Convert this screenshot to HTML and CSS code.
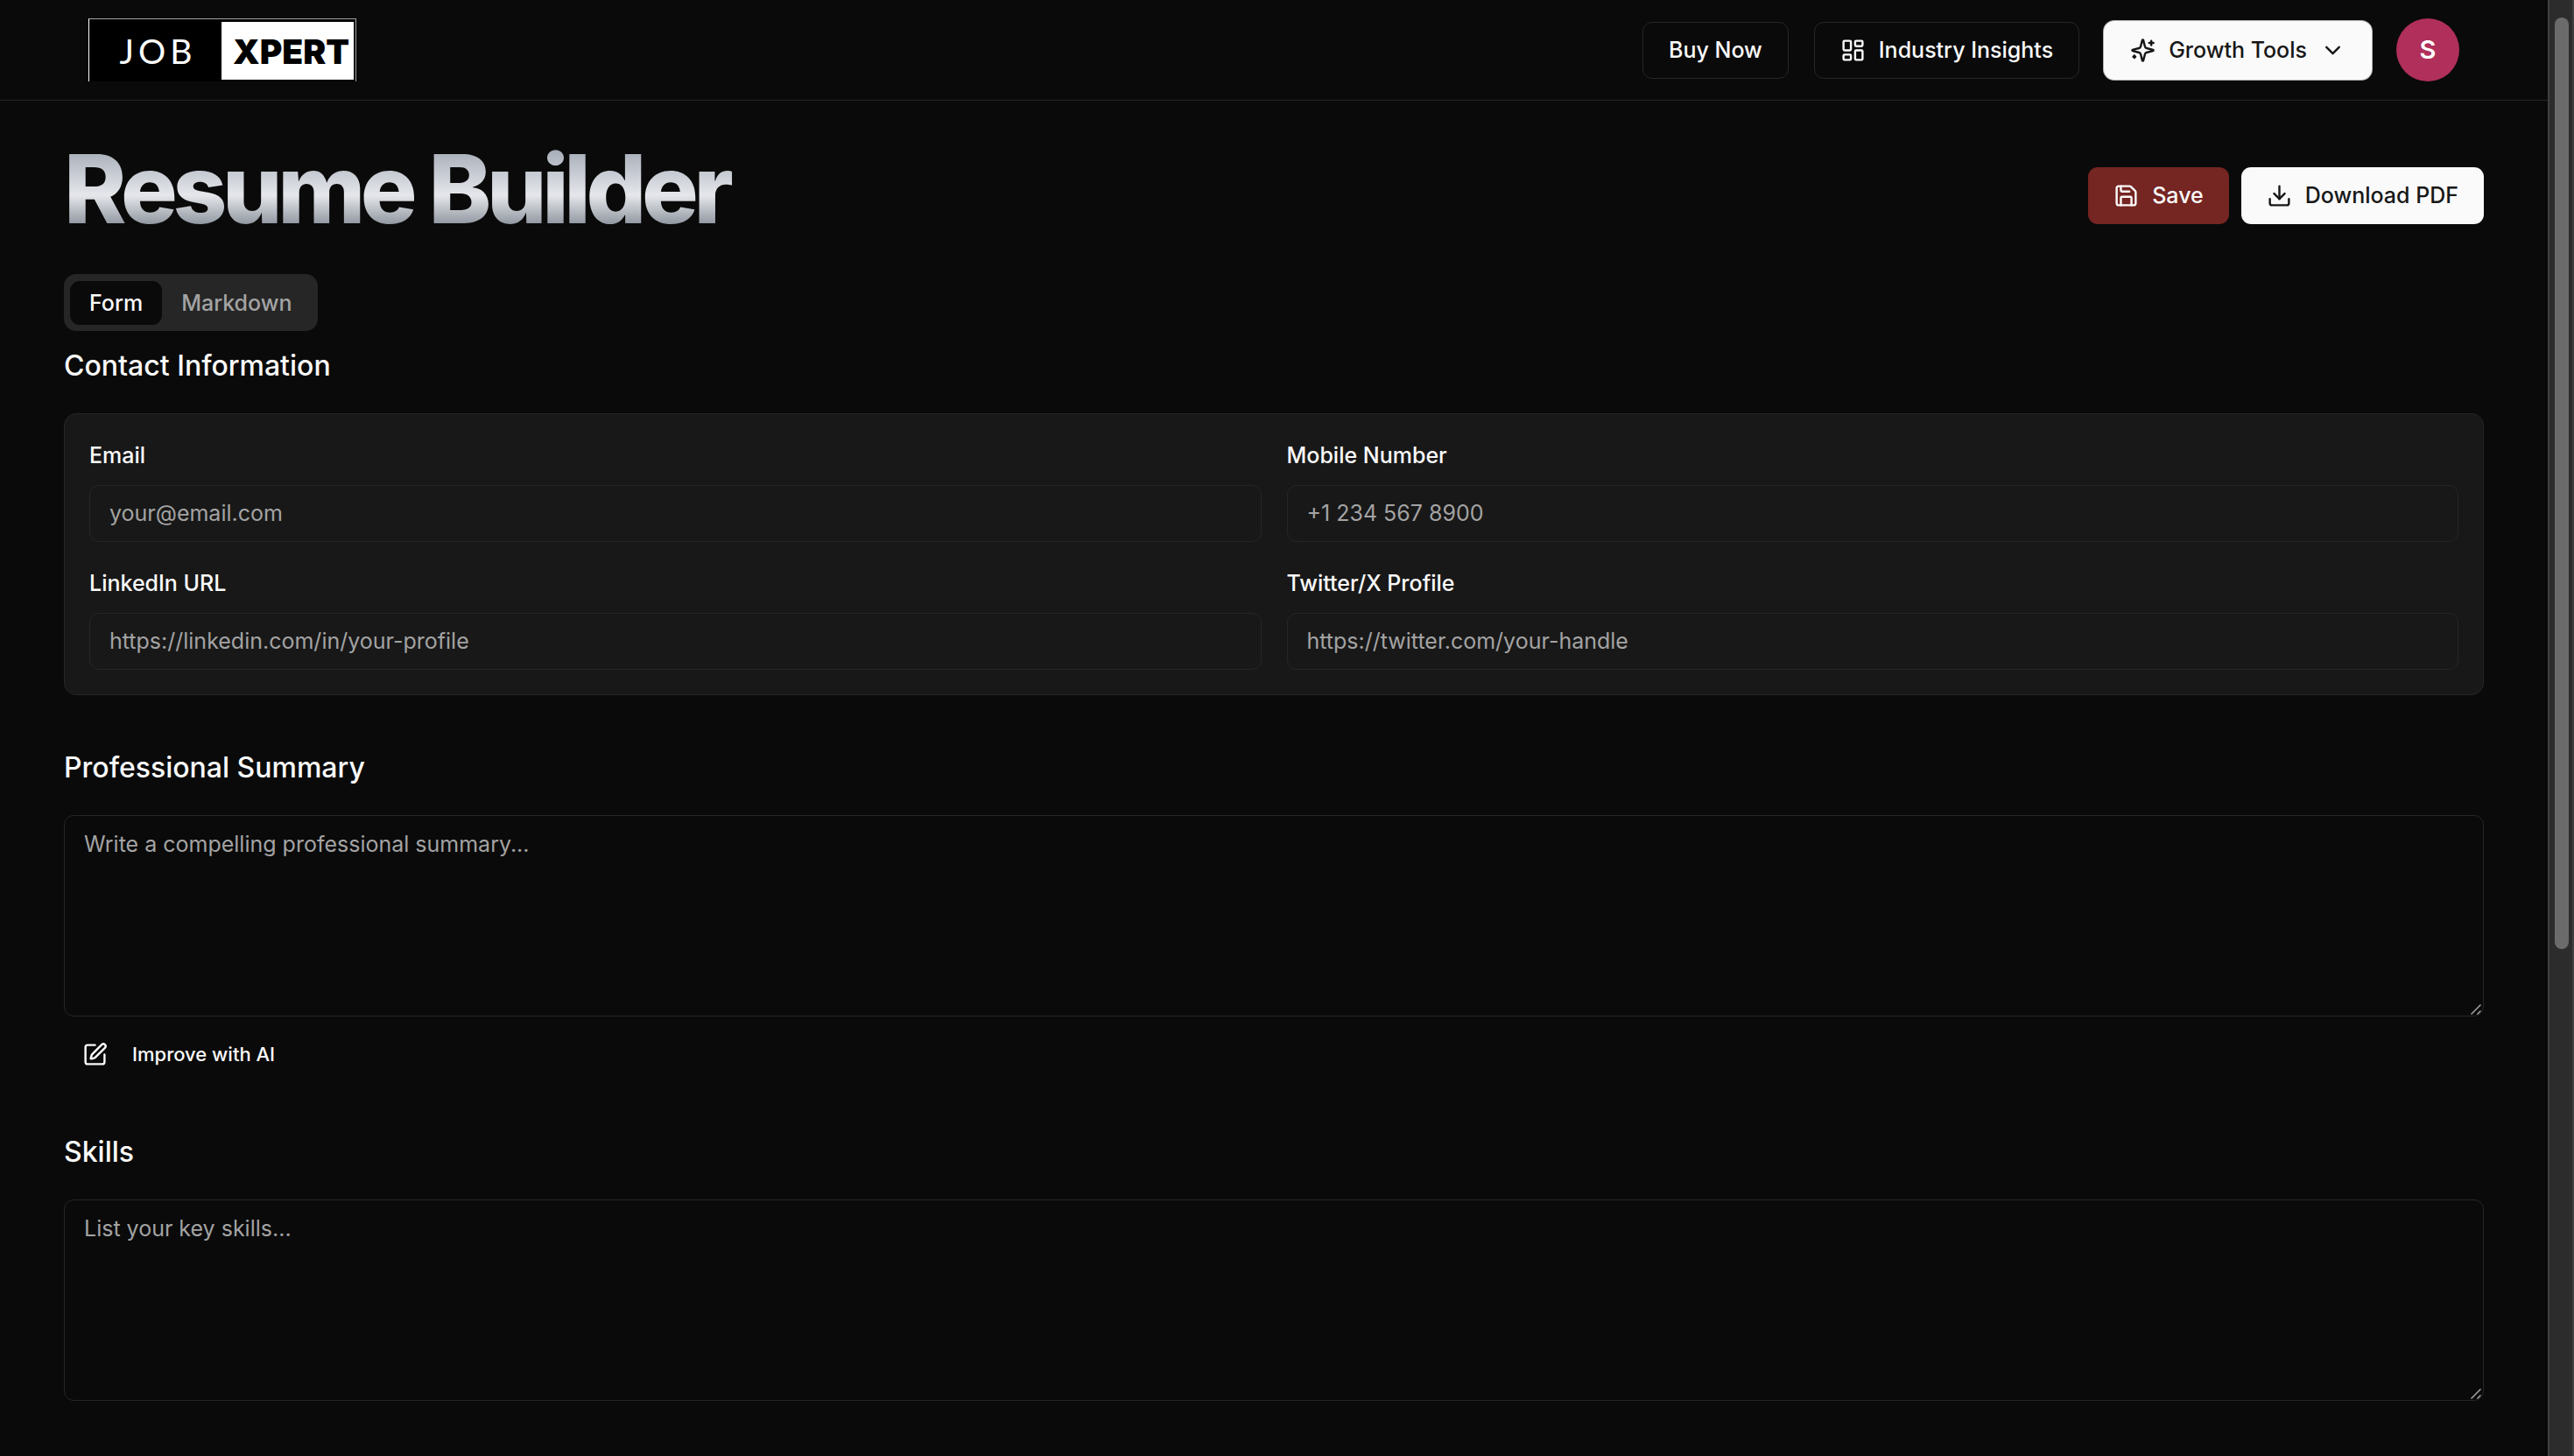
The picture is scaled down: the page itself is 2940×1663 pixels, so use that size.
FILE: index.html
```html
<!DOCTYPE html>
<html lang="en">
<head>
  <meta charset="utf-8">
  <meta name="viewport" content="width=device-width, initial-scale=1">
  <title>Resume Builder</title>
  <link rel="stylesheet" href="styles.css">
</head>
<body>
  <header class="header">
    <nav class="nav container">
      <a class="logo" href="#" aria-label="Job Xpert home">
        <span class="logo-job">JOB</span>
        <span class="logo-xpert">XPERT</span>
      </a>
      <div class="nav-actions">
        <button class="btn btn-outline" type="button">Buy Now</button>
        <a class="btn btn-outline" href="#">
          <svg class="icon" viewBox="0 0 24 24"><rect width="7" height="9" x="3" y="3" rx="1"/><rect width="7" height="5" x="14" y="3" rx="1"/><rect width="7" height="9" x="14" y="12" rx="1"/><rect width="7" height="5" x="3" y="16" rx="1"/></svg>
          Industry Insights
        </a>
        <button class="btn btn-light btn-ring" type="button">
          <svg class="icon" viewBox="0 0 24 24"><path d="M9.937 15.5A2 2 0 0 0 8.5 14.063l-6.135-1.582a.5.5 0 0 1 0-.962L8.5 9.936A2 2 0 0 0 9.937 8.5l1.582-6.135a.5.5 0 0 1 .963 0L14.063 8.5A2 2 0 0 0 15.5 9.937l6.135 1.581a.5.5 0 0 1 0 .964L15.5 14.063a2 2 0 0 0-1.437 1.437l-1.582 6.135a.5.5 0 0 1-.963 0z"/><path d="M20 3v4"/><path d="M22 5h-4"/><path d="M4 17v2"/><path d="M5 18H3"/></svg>
          Growth Tools
          <svg class="icon" viewBox="0 0 24 24"><path d="m6 9 6 6 6-6"/></svg>
        </button>
        <button class="avatar" type="button" aria-label="Account">S</button>
      </div>
    </nav>
  </header>

  <main class="container page">
    <div class="title-row">
      <h1 class="title">Resume Builder</h1>
      <div class="title-actions">
        <button class="btn btn-danger" type="button">
          <svg class="icon" viewBox="0 0 24 24"><path d="M15.2 3a2 2 0 0 1 1.4.6l3.8 3.8a2 2 0 0 1 .6 1.4V19a2 2 0 0 1-2 2H5a2 2 0 0 1-2-2V5a2 2 0 0 1 2-2z"/><path d="M17 21v-7a1 1 0 0 0-1-1H8a1 1 0 0 0-1 1v7"/><path d="M7 3v4a1 1 0 0 0 1 1h7"/></svg>
          Save
        </button>
        <button class="btn btn-light" type="button">
          <svg class="icon" viewBox="0 0 24 24"><path d="M21 15v4a2 2 0 0 1-2 2H5a2 2 0 0 1-2-2v-4"/><path d="m7 10 5 5 5-5"/><path d="M12 15V3"/></svg>
          Download PDF
        </button>
      </div>
    </div>

    <div class="tabs" role="tablist">
      <button class="tab tab-active" type="button" role="tab" aria-selected="true">Form</button>
      <button class="tab" type="button" role="tab" aria-selected="false">Markdown</button>
    </div>

    <form class="form">
      <section class="section">
        <h2 class="section-title">Contact Information</h2>
        <div class="card">
          <div class="field">
            <label class="label" for="email">Email</label>
            <input class="input" id="email" type="email" placeholder="your@email.com">
          </div>
          <div class="field">
            <label class="label" for="mobile">Mobile Number</label>
            <input class="input" id="mobile" type="tel" placeholder="+1 234 567 8900">
          </div>
          <div class="field">
            <label class="label" for="linkedin">LinkedIn URL</label>
            <input class="input" id="linkedin" type="url" placeholder="https://linkedin.com/in/your-profile">
          </div>
          <div class="field">
            <label class="label" for="twitter">Twitter/X Profile</label>
            <input class="input" id="twitter" type="url" placeholder="https://twitter.com/your-handle">
          </div>
        </div>
      </section>

      <section class="section">
        <h2 class="section-title" id="summary-title">Professional Summary</h2>
        <div class="editor">
          <textarea class="textarea" aria-labelledby="summary-title" placeholder="Write a compelling professional summary..."></textarea>
          <svg class="grip" viewBox="0 0 12 12"><path d="M.5 11.5l11-11M7.500 11.500l4-4"/></svg>
        </div>
        <button class="improve" type="button">
          <svg class="icon" viewBox="0 0 24 24"><path d="M12 3H5a2 2 0 0 0-2 2v14a2 2 0 0 0 2 2h14a2 2 0 0 0 2-2v-7"/><path d="M18.375 2.625a1 1 0 0 1 3 3l-9.013 9.014a2 2 0 0 1-.853.505l-2.873.84a.5.5 0 0 1-.62-.62l.84-2.873a2 2 0 0 1 .506-.852z"/></svg>
          Improve with AI
        </button>
      </section>

      <section class="section">
        <h2 class="section-title" id="skills-title">Skills</h2>
        <div class="editor">
          <textarea class="textarea" aria-labelledby="skills-title" placeholder="List your key skills..."></textarea>
          <svg class="grip" viewBox="0 0 12 12"><path d="M.5 11.5l11-11M7.500 11.500l4-4"/></svg>
        </div>
      </section>
    </form>
  </main>

  <div class="scrollbar" aria-hidden="true"><div class="scrollbar-thumb"></div></div>
</body>
</html>
```
FILE: styles.css
```css
*, *::before, *::after { box-sizing: border-box; }

body {
  margin: 0;
  padding-right: 30px;
  min-height: 100vh;
  background: #0a0a0a;
  color: #fafafa;
  font-family: Inter, "Liberation Sans", sans-serif;
  font-size: 25px;
  line-height: 36px;
}

button, input, textarea { font: inherit; color: inherit; }
button { cursor: pointer; }
h1, h2 { margin: 0; }

.container { padding-left: 73px; padding-right: 73px; }

.icon {
  width: 29px;
  height: 29px;
  flex: none;
  fill: none;
  stroke: currentColor;
  stroke-width: 2;
  stroke-linecap: round;
  stroke-linejoin: round;
}

/* Header */
.header { border-bottom: 1px solid #262626; }

.nav {
  display: flex;
  align-items: center;
  justify-content: space-between;
  height: 114px;
}

.logo {
  display: flex;
  align-items: center;
  width: 306px;
  height: 72px;
  margin-left: 28px;
  padding-right: 2px;
  background: #000;
  border: 1px solid #a3a3a3;
  border-left-color: #fff;
  border-bottom: 0;
  text-decoration: none;
  font-size: 39px;
  line-height: 66px;
}

.logo-job {
  flex: 1;
  padding-left: 6px;
  text-align: center;
  font-family: Lato, sans-serif;
  color: #fff;
  letter-spacing: 5px;
}

.logo-xpert {
  width: 151px;
  padding: 2px 0 0 8px;
  line-height: 64px;
  text-align: center;
  font-weight: 900;
  color: #000;
  background: #fff;
}

.nav-actions {
  display: flex;
  align-items: center;
  gap: 29px;
  margin-right: 28px;
}

.btn {
  display: inline-flex;
  align-items: center;
  justify-content: center;
  gap: 15px;
  height: 65px;
  padding: 0 29px;
  border: 0;
  border-radius: 11px;
  font-weight: 500;
  color: #fafafa;
  text-decoration: none;
  white-space: nowrap;
}

.btn-outline { border: 1px solid #262626; background: #0a0a0a; }
.btn-light { background: #fafafa; color: #171717; }
.btn-ring { box-shadow: 0 0 0 1px #fafafa, 0 0 0 2px #b4b4b4; }
.btn-danger { background: #752522; }

.avatar {
  width: 72px;
  height: 72px;
  padding: 0;
  border: 0;
  border-radius: 50%;
  background: #b02f5b;
  color: #fff;
  font-size: 29px;
  font-weight: 600;
}

/* Page title */
.page { padding-top: 47px; padding-bottom: 58px; }

.title-row {
  display: flex;
  align-items: center;
  justify-content: space-between;
}

.title {
  padding: 0 14px 14px 0;
  font-size: 108px;
  line-height: 108px;
  font-weight: 800;
  letter-spacing: -0.05em;
  color: transparent;
  background: linear-gradient(to bottom, #9ca3af, #e5e7eb, #4b5563);
  -webkit-background-clip: text;
  background-clip: text;
}

.title-actions { display: flex; gap: 14px; }

/* Tabs */
.tabs {
  display: inline-flex;
  align-items: center;
  height: 65px;
  margin-top: 29px;
  padding: 7px;
  border-radius: 14px;
  background: #262626;
  vertical-align: top;
}

.tab {
  padding: 7px 22px;
  border: 0;
  border-radius: 11px;
  background: transparent;
  color: #a3a3a3;
  font-weight: 500;
}

.tab-active { background: #0a0a0a; color: #fafafa; }

/* Form */
.form {
  display: flex;
  flex-direction: column;
  gap: 57px;
  margin-top: 14px;
}

.section-title {
  margin-bottom: 29px;
  font-size: 32px;
  line-height: 51px;
  font-weight: 500;
}

.card {
  display: grid;
  grid-template-columns: 1fr 1fr;
  gap: 29px;
  padding: 29px 28px 28px;
  border: 1px solid #262626;
  border-radius: 14px;
  background: #181818;
}

.field { display: flex; flex-direction: column; gap: 16px; }
.label { font-weight: 500; }

.input, .textarea {
  display: block;
  width: 100%;
  border: 1px solid #262626;
  border-radius: 11px;
  background: transparent;
  outline: 0;
}

.input { height: 65px; padding: 0 22px 2px; }
.input::placeholder, .textarea::placeholder { color: #a3a3a3; opacity: 1; }

.editor { position: relative; }
.textarea { height: 230px; padding: 14px 22px; resize: none; }

/* Resize handle in the corner of a text area */
.grip {
  position: absolute;
  right: 3px;
  bottom: 2px;
  width: 12px;
  height: 12px;
  fill: none;
  stroke: #a3a3a3;
  stroke-width: 1.5;
}

.improve {
  display: inline-flex;
  align-items: center;
  gap: 28px;
  height: 58px;
  margin-top: 14px;
  padding: 0 21px;
  border: 0;
  background: transparent;
  font-size: 22px;
  font-weight: 500;
  vertical-align: top;
}

/* Scrollbar */
.scrollbar {
  position: fixed;
  top: 0;
  right: 0;
  bottom: 0;
  width: 30px;
  padding: 20px 4px 0 6px;
  border: solid #404040;
  border-width: 0 2px;
  background: #2c2c2c;
}

.scrollbar-thumb { width: 16px; height: 64vh; border-radius: 8px; background: #6b6b6b; }
```
